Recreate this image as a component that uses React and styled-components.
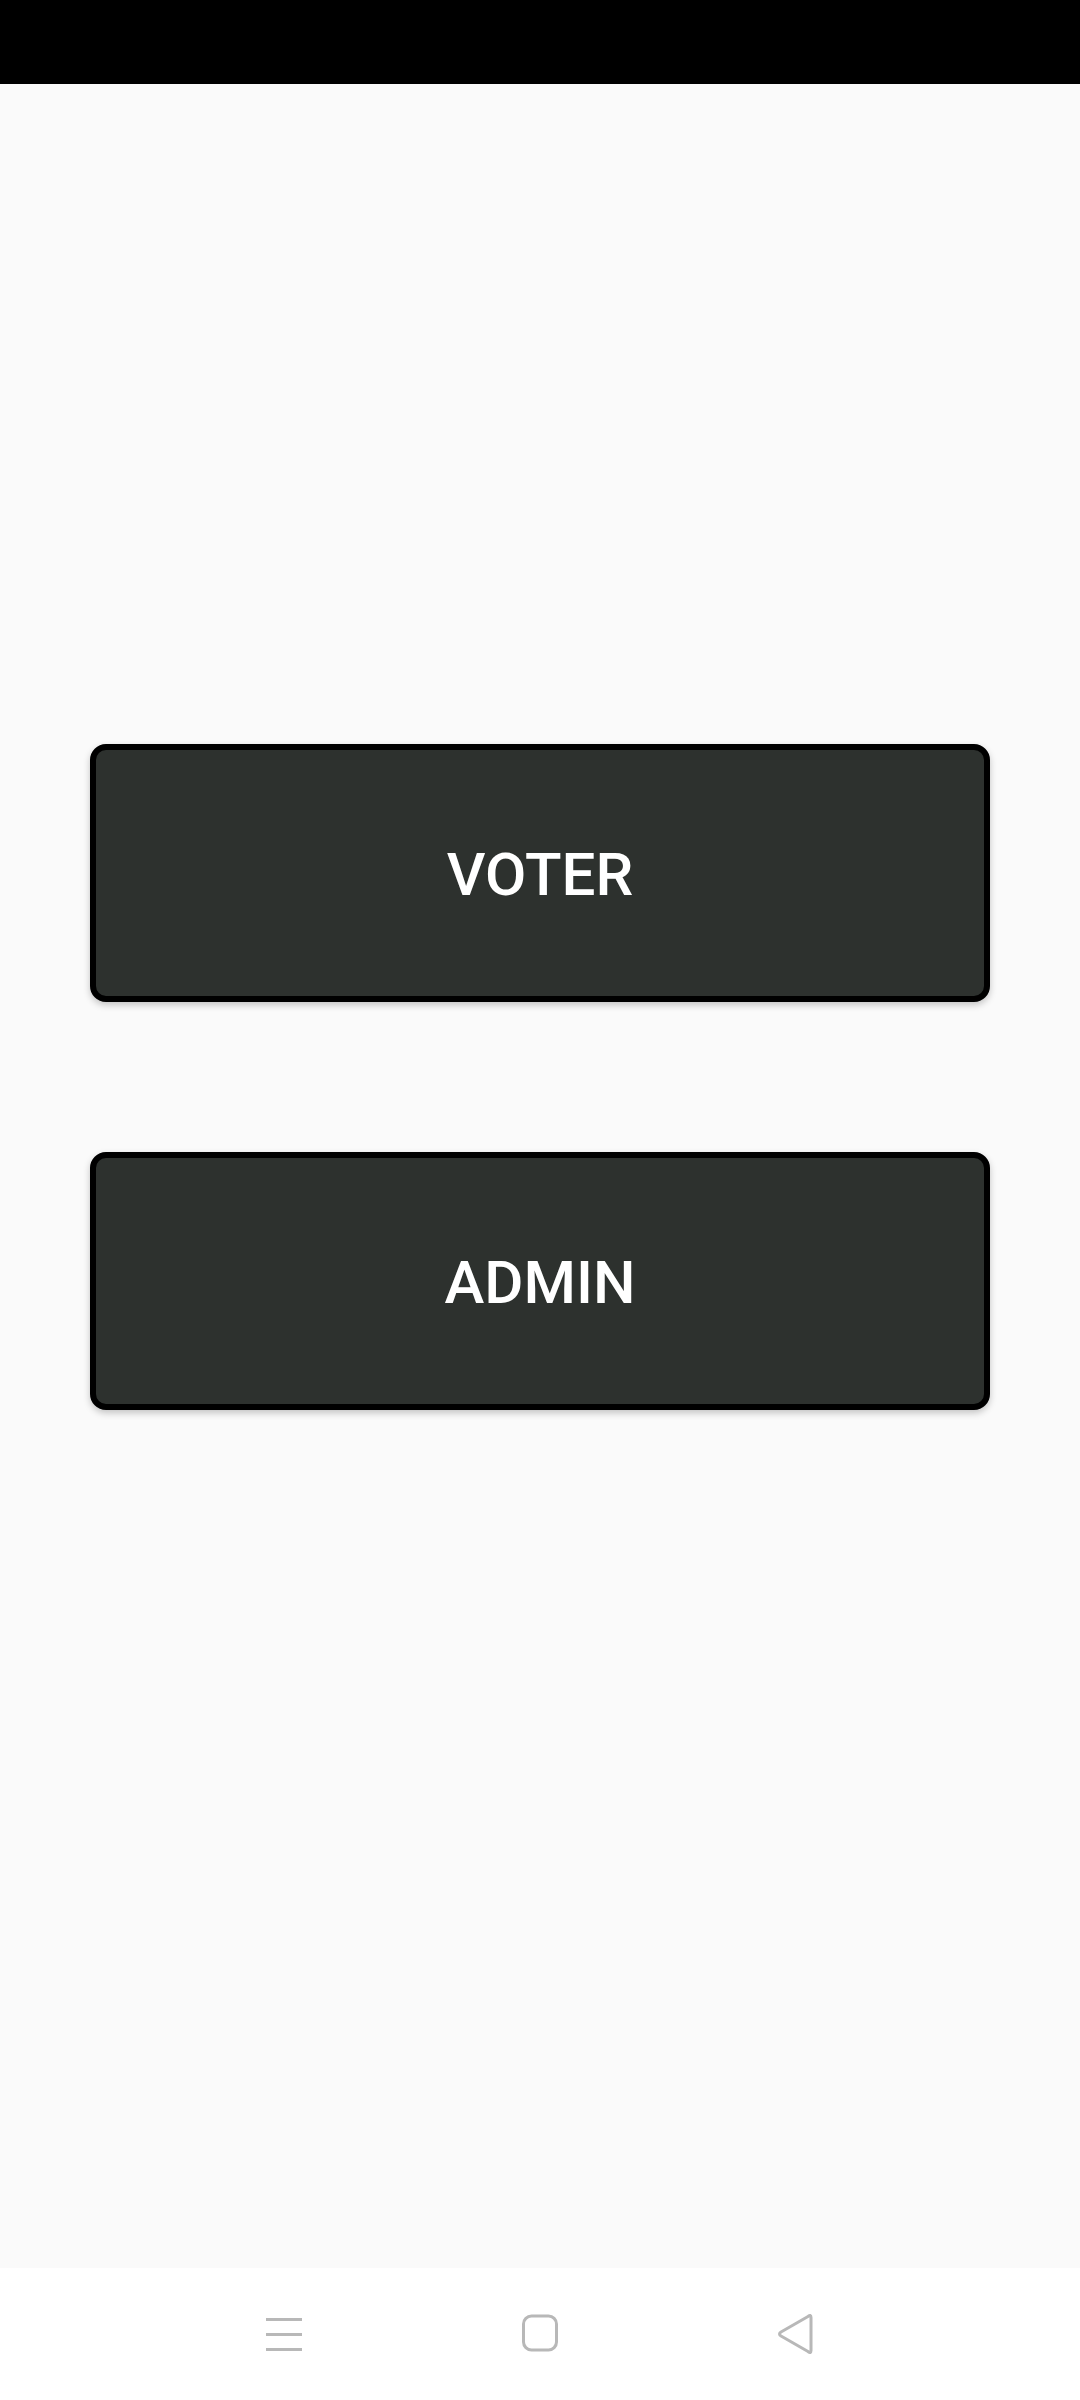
import React from "react";
import styled, { createGlobalStyle } from "styled-components";

const Global = createGlobalStyle`
  html, body { margin: 0; padding: 0; background: #fafafa; }
  body { font-family: Roboto, "Noto Sans", Arial, sans-serif; }
  * { box-sizing: border-box; }
`;

const Screen = styled.div`
  width: 1080px;
  height: 2400px;
  display: flex;
  flex-direction: column;
  background: #fafafa;
`;

const StatusBar = styled.div`
  height: 84px;
  flex: 0 0 84px;
  background: #000;
`;

const Main = styled.main`
  flex: 1;
  display: flex;
  flex-direction: column;
  align-items: center;
  padding-top: 660px;
  gap: 150px;
`;

const RoleButton = styled.button`
  width: 900px;
  height: 258px;
  background: #2d312e;
  border: 6px solid #000;
  border-radius: 16px;
  box-shadow: 0 3px 7px rgba(0, 0, 0, 0.22);
  color: #fff;
  font-family: Roboto, "Noto Sans", Arial, sans-serif;
  font-weight: 500;
  font-size: 60px;
  letter-spacing: 0;
  display: flex;
  align-items: center;
  justify-content: center;
  padding: 3px 0 0;
  cursor: pointer;
`;

const NavBar = styled.nav`
  height: 132px;
  flex: 0 0 132px;
  background: #fff;
  display: flex;
  justify-content: center;
  align-items: center;
`;

const NavSlot = styled.div`
  width: 256px;
  display: flex;
  justify-content: center;
  align-items: center;
`;

const NAV = "#b8b8b8";

const MenuIcon = () => (
  <svg width="40" height="40" viewBox="0 0 40 40">
    <g fill={NAV}>
      <rect x="2" y="4" width="36" height="3" />
      <rect x="2" y="19" width="36" height="3" />
      <rect x="2" y="34" width="36" height="3" />
    </g>
  </svg>
);

const HomeIcon = () => (
  <svg width="40" height="40" viewBox="0 0 40 40">
    <rect x="3.5" y="2" width="33" height="34" rx="8" fill="none" stroke={NAV} strokeWidth="3" />
  </svg>
);

const BackIcon = () => (
  <svg width="40" height="42" viewBox="0 0 40 42">
    <path
      d="M35 4.5 Q35 1 32 3.5 L5 19 Q2 21 5 23 L32 38.5 Q35 41 35 37.5 Z"
      fill="none"
      stroke={NAV}
      strokeWidth="3"
      strokeLinejoin="round"
    />
  </svg>
);

export default function App() {
  return (
    <>
      <Global />
      <Screen>
        <StatusBar />
        <Main>
          <RoleButton>VOTER</RoleButton>
          <RoleButton>ADMIN</RoleButton>
        </Main>
        <NavBar>
          <NavSlot><MenuIcon /></NavSlot>
          <NavSlot><HomeIcon /></NavSlot>
          <NavSlot><BackIcon /></NavSlot>
        </NavBar>
      </Screen>
    </>
  );
}
